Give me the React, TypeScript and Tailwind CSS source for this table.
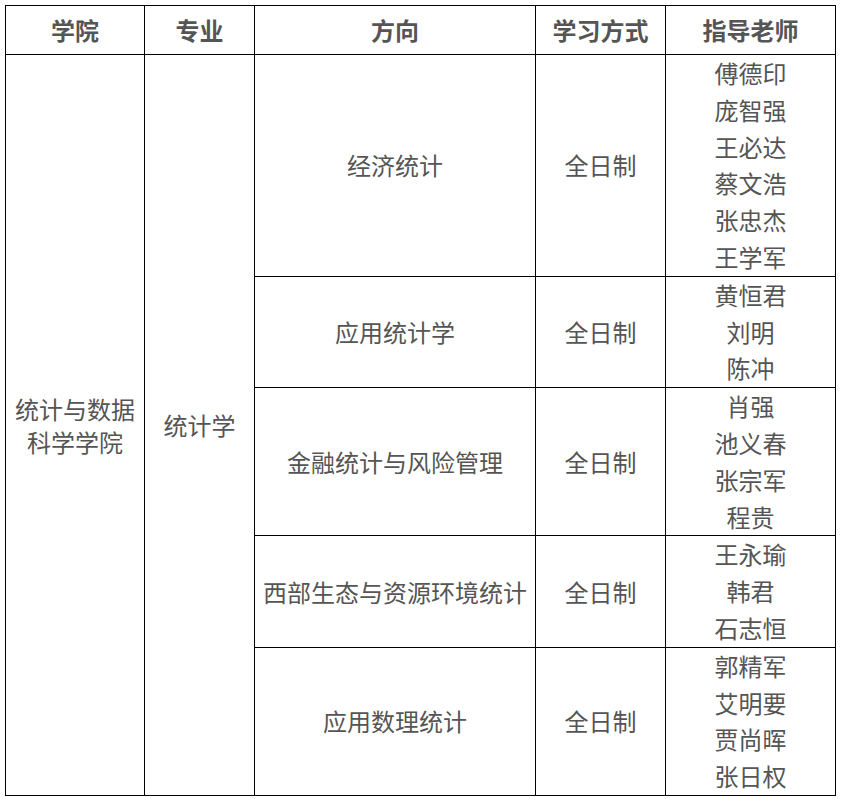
import React from "react";

const rows = [
  { dir: "经济统计", tutors: ["傅德印", "庞智强", "王必达", "蔡文浩", "张忠杰", "王学军"] },
  { dir: "应用统计学", tutors: ["黄恒君", "刘明", "陈冲"] },
  { dir: "金融统计与风险管理", tutors: ["肖强", "池义春", "张宗军", "程贵"] },
  { dir: "西部生态与资源环境统计", tutors: ["王永瑜", "韩君", "石志恒"] },
  { dir: "应用数理统计", tutors: ["郭精军", "艾明要", "贾尚晖", "张日权"] },
];

const font = { fontFamily: '"Microsoft YaHei", "Noto Sans CJK SC", sans-serif' };

const App = () => {
  return (
    <div className="min-h-screen bg-white pt-[5px] pl-[5px]" style={font}>
      <table className="border-collapse table-fixed text-[#555] text-[24px]">
        <colgroup>
          <col className="w-[139px]" />
          <col className="w-[110px]" />
          <col className="w-[281px]" />
          <col className="w-[130px]" />
          <col className="w-[170px]" />
        </colgroup>
        <thead>
          <tr className="h-[49px]">
            {["学院", "专业", "方向", "学习方式", "指导老师"].map((h) => (
              <th key={h} className="border border-black font-bold text-center p-0 leading-[30px]">
                {h}
              </th>
            ))}
          </tr>
        </thead>
        <tbody>
          {rows.map((r, i) => (
            <tr key={r.dir}>
              {i === 0 && (
                <>
                  <td rowSpan={5} className="border border-black text-center p-0 leading-[33px]">
                    统计与数据
                    <br />
                    科学学院
                  </td>
                  <td rowSpan={5} className="border border-black text-center p-0 leading-[34px]">
                    统计学
                  </td>
                </>
              )}
              <td className="border border-black text-center p-0 leading-[34px]">{r.dir}</td>
              <td className="border border-black text-center p-0 leading-[34px]">全日制</td>
              <td className="border border-black text-center p-0 leading-[36.8px]">
                {r.tutors.map((t) => (
                  <div key={t}>{t}</div>
                ))}
              </td>
            </tr>
          ))}
        </tbody>
      </table>
    </div>
  );
};

export default App;
